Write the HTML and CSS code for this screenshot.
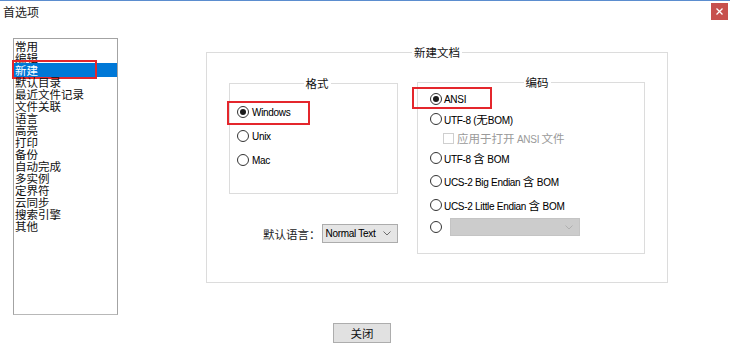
FILE: index.html
```html
<!DOCTYPE html>
<html lang="zh-CN">
<head>
<meta charset="utf-8">
<title>首选项</title>
<link rel="stylesheet" href="styles.css">
</head>
<body>
<div class="window">
  <div class="titlebar">
    <span class="title">首选项</span>
    <span class="close"><svg width="7" height="7" viewBox="0 0 7 7"><path d="M0.5 0.5L6.5 6.5M6.5 0.5L0.5 6.5" stroke="#fff" stroke-width="1.3"/></svg></span>
  </div>
  <div class="content">
    <ul class="cats">
      <li>常用</li>
      <li>编辑</li>
      <li class="sel">新建<span class="mark mark-cat"></span></li>
      <li>默认目录</li>
      <li>最近文件记录</li>
      <li>文件关联</li>
      <li>语言</li>
      <li>高亮</li>
      <li>打印</li>
      <li>备份</li>
      <li>自动完成</li>
      <li>多实例</li>
      <li>定界符</li>
      <li>云同步</li>
      <li>搜索引擎</li>
      <li>其他</li>
    </ul>
    <fieldset class="group main">
      <legend>新建文档</legend>
      <div class="cols">
        <div class="left">
          <fieldset class="group fmt">
            <legend>格式</legend>
            <div class="opt"><span class="radio on"></span><span>Windows</span><span class="mark mark-win"></span></div>
            <div class="opt"><span class="radio"></span><span>Unix</span></div>
            <div class="opt"><span class="radio"></span><span>Mac</span></div>
          </fieldset>
          <div class="lang">
            <span class="cj lbl">默认语言：</span>
            <span class="select"><span>Normal Text</span><svg width="8" height="5" viewBox="0 0 8 5"><path d="M0.5 0.5L4 4L7.5 0.5" fill="none" stroke="#6d6d6d" stroke-width="1"/></svg></span>
          </div>
        </div>
        <fieldset class="group enc">
          <legend>编码</legend>
          <div class="opt h20"><span class="radio on"></span><span>ANSI</span><span class="mark mark-ansi"></span></div>
          <div class="opt h20"><span class="radio"></span><span>UTF-8 (<span class="cj">无</span>BOM)</span></div>
          <div class="opt h18 sub"><span class="check"></span><span class="dis"><span class="cj">应用于打开</span> ANSI <span class="cj">文件</span></span></div>
          <div class="opt h22"><span class="radio"></span><span>UTF-8 <span class="cj">含</span> BOM</span></div>
          <div class="opt h24"><span class="radio"></span><span>UCS-2 Big Endian <span class="cj">含</span> BOM</span></div>
          <div class="opt h24"><span class="radio"></span><span>UCS-2 Little Endian <span class="cj">含</span> BOM</span></div>
          <div class="opt h20"><span class="radio"></span><span class="select disabled"><span></span><svg width="8" height="5" viewBox="0 0 8 5"><path d="M0.5 0.5L4 4L7.5 0.5" fill="none" stroke="#b0b0b0" stroke-width="1"/></svg></span></div>
        </fieldset>
      </div>
    </fieldset>
  </div>
  <div class="footer">
    <button class="btn cj">关闭</button>
  </div>
</div>
</body>
</html>
```
FILE: styles.css
```css
html, body {
  margin: 0;
  padding: 0;
  background: #fff;
}
body {
  font-family: "Liberation Sans", "Noto Sans CJK SC", sans-serif;
  font-size: 10px;
  letter-spacing: -0.3px;
  color: #000;
  -webkit-text-stroke: 0.05px #000;
}
.cj {
  font-family: "Noto Sans CJK SC", "Liberation Sans", sans-serif;
  font-size: 11.5px;
  letter-spacing: 0;
  -webkit-text-stroke: 0;
}
.window {
  width: 730px;
  height: 352px;
  overflow: hidden;
}
.titlebar {
  height: 37px;
  border-top: 1px solid #5b8dcf;
  display: flex;
  justify-content: space-between;
  align-items: flex-start;
}
.title {
  font-family: "Noto Sans CJK SC", sans-serif;
  font-size: 12px;
  letter-spacing: 0;
  -webkit-text-stroke: 0;
  line-height: 22px;
  padding-left: 3px;
  color: #222;
}
.close {
  width: 17px;
  height: 17px;
  margin-top: 2px;
  margin-right: 2px;
  background: #c7504d;
  display: flex;
  align-items: center;
  justify-content: center;
}
.content {
  display: flex;
  align-items: flex-start;
  padding-left: 13px;
  height: 277px;
}
.cats {
  list-style: none;
  margin: 0;
  padding: 1px 0 0 0;
  width: 105px;
  height: 277px;
  box-sizing: border-box;
  border: 1px solid #a3a3a3;
  border-bottom-color: #b8b8b8;
  font-family: "Noto Sans CJK SC", sans-serif;
  font-size: 11.5px;
  letter-spacing: 0;
  -webkit-text-stroke: 0;
  color: #111;
}
.cats li {
  height: 12px;
  line-height: 12px;
  padding-left: 1px;
  position: relative;
  white-space: nowrap;
}
.cats li.sel {
  background: #0078d7;
  color: #fff;
  box-shadow: 0 -1px 0 #0078d7, 0 1px 0 #0078d7;
}
.mark {
  position: absolute;
  box-sizing: border-box;
  border: 2px solid #e4262c;
  pointer-events: none;
}
.mark-cat {
  left: -2px;
  top: -4px;
  width: 85px;
  height: 19px;
}
.group {
  margin: 0;
  padding: 0;
  border: 1px solid #dcdcdc;
  min-width: 0;
}
.group > legend {
  font-family: "Noto Sans CJK SC", sans-serif;
  font-size: 11.5px;
  letter-spacing: 0;
  -webkit-text-stroke: 0;
  line-height: 14px;
  padding: 0 2px;
  margin: 0 auto;
  color: #111;
}
.main {
  margin-left: 88px;
  margin-top: 7px;
  width: 462px;
  box-sizing: border-box;
  padding: 0 22px 28px 22px;
}
.cols {
  display: flex;
  gap: 19px;
  align-items: flex-start;
}
.left {
  width: 169px;
}
.fmt {
  margin-top: 17px;
  width: 169px;
  box-sizing: border-box;
  padding: 10px 0 21px 7px;
}
.opt {
  height: 24px;
  display: flex;
  align-items: center;
  gap: 2px;
  position: relative;
  white-space: nowrap;
}
.fmt .opt {
  gap: 3px;
}
.h18 { height: 18px; }
.h20 { height: 20px; }
.h22 { height: 22px; }
.h24 { height: 24px; }
.radio {
  width: 12px;
  height: 12px;
  box-sizing: border-box;
  border: 1px solid #333;
  border-radius: 50%;
  background: #fff;
  flex: none;
  display: flex;
  align-items: center;
  justify-content: center;
}
.radio.on::after {
  content: "";
  width: 6px;
  height: 6px;
  border-radius: 50%;
  background: #1a1a1a;
}
.check {
  width: 11px;
  height: 11px;
  box-sizing: border-box;
  border: 1px solid #cfcfcf;
  background: #fff;
  flex: none;
}
.sub {
  padding-left: 13px;
  gap: 3px;
}
.dis {
  color: #9a9a9a;
  -webkit-text-stroke: 0;
}
.mark-win {
  left: -10px;
  top: 1px;
  width: 83px;
  height: 24px;
}
.mark-ansi {
  left: -18px;
  top: -2px;
  width: 80px;
  height: 22px;
}
.lang {
  margin-top: 30px;
  margin-left: 34px;
  display: flex;
  align-items: center;
  gap: 1px;
  white-space: nowrap;
}
.lbl {
  color: #222;
}
.select {
  width: 79px;
  height: 19px;
  box-sizing: border-box;
  border: 1px solid #acacac;
  background: #e5e5e5;
  display: flex;
  align-items: center;
  justify-content: space-between;
  padding: 0 6px 0 3px;
  color: #000;
}
.select.disabled {
  width: 130px;
  height: 18px;
  margin-left: 6px;
  background: #cccccc;
  border-color: #c4c4c4;
}
.enc {
  margin-top: 16px;
  width: 228px;
  box-sizing: border-box;
  padding: 0 0 16px 12px;
}
.footer {
  padding-left: 333px;
  padding-top: 8px;
}
.btn {
  width: 58px;
  height: 20px;
  margin: 0;
  padding: 0;
  border: 1px solid #adadad;
  background: #e1e1e1;
  color: #111;
  line-height: 16px;
  display: flex;
  align-items: center;
  justify-content: center;
}
```
